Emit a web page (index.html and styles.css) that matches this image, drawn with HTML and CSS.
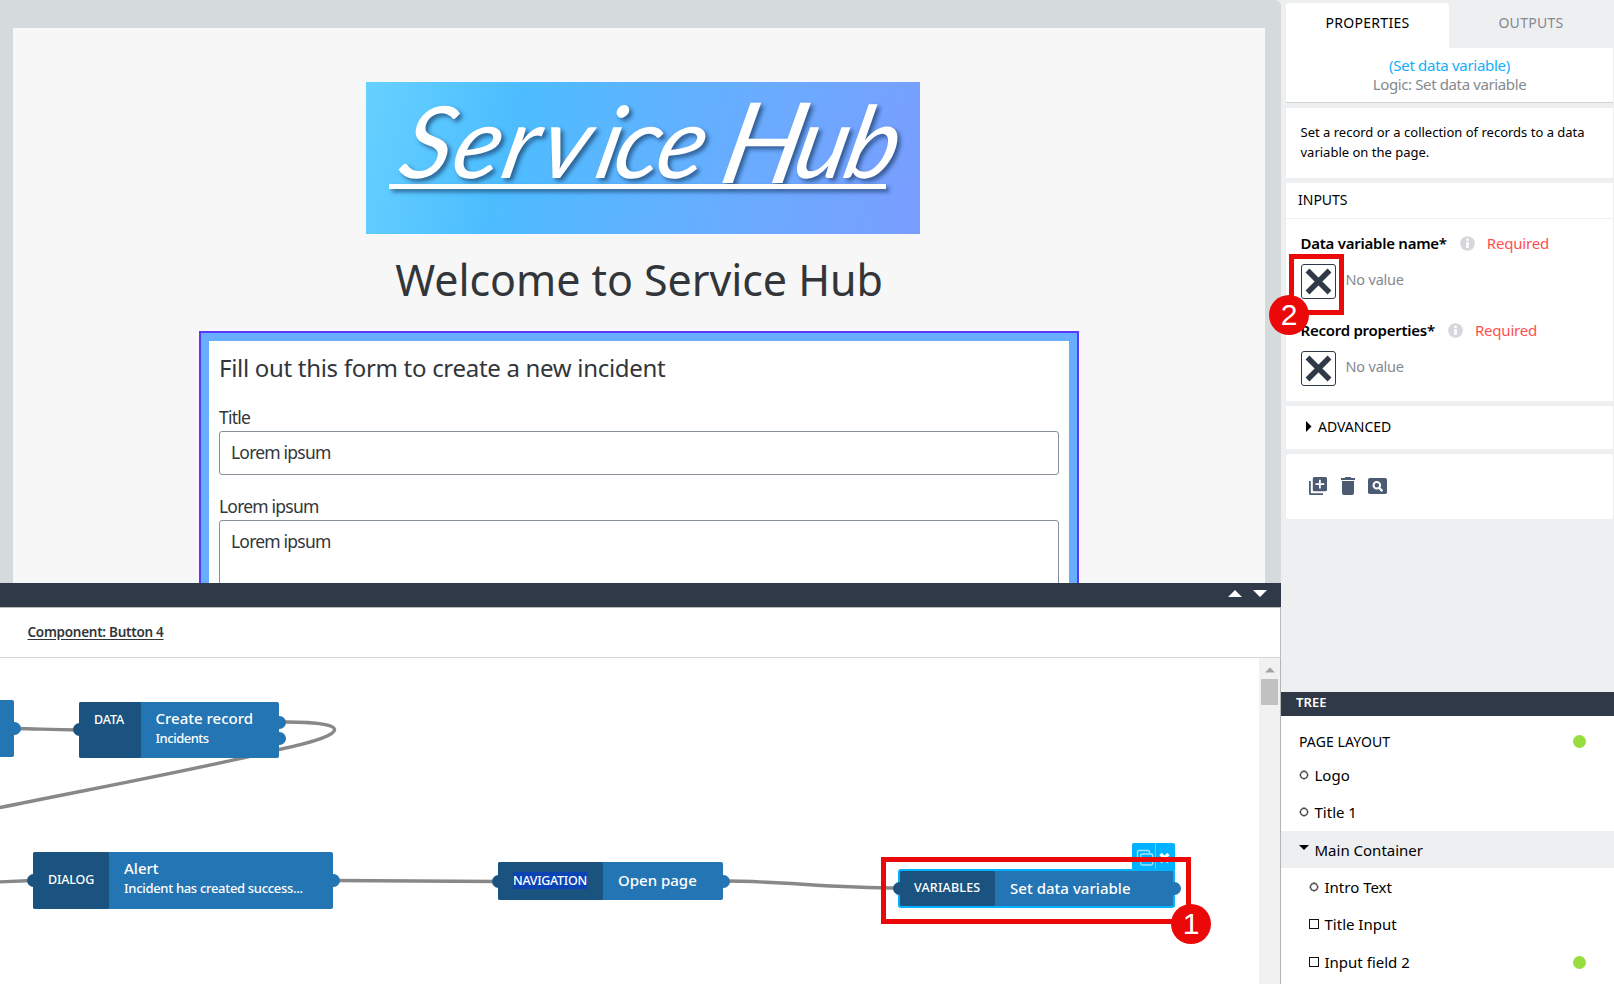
FILE: index.html
```html
<!DOCTYPE html>
<html lang="en">
<head>
<meta charset="utf-8">
<title>Service Hub editor</title>
<link rel="stylesheet" href="styles.css">
</head>
<body>
<div class="app">
  <main class="work">
    <section class="preview">
      <div class="page">
        <svg class="logo" width="554" height="152" viewBox="0 0 554 152">
          <g class="logo-ink">
            <text class="logo-text" transform="translate(0 96) skewX(-13)" x="30 82 132 170 226 244 286" y="0">Service</text>
            <text class="logo-text" transform="translate(0 96) skewX(-13)" x="352 424 474" y="5 0 0"><tspan class="logo-cap">H</tspan>ub</text>
            <rect x="23" y="102" width="497" height="5"/>
          </g>
        </svg>
        <h1 class="title">Welcome to Service Hub</h1>
        <form class="form">
          <h2 class="form-title">Fill out this form to create a new incident</h2>
          <label class="label">Title</label>
          <div class="field">Lorem ipsum</div>
          <label class="label second">Lorem ipsum</label>
          <div class="field area">Lorem ipsum</div>
        </form>
      </div>
    </section>
    <div class="splitter">
      <svg width="40" height="9" viewBox="0 0 40 9"><path d="M0 8L7 1l7 7zM25 1h14l-7 7z" fill="#fff"/></svg>
    </div>
    <div class="crumb"><span class="crumb-link">Component: Button 4</span></div>
    <section class="flow">
      <div class="stage">
        <svg class="wires" width="1259" height="326" viewBox="0 658 1259 326">
          <path d="M14 728.5C40 728.5 45 730 79 730M279 722C348 721 358 733 279 749.500C200 769 80 791-2 808M-2 882L33 880.500M333 880.500L498 881.500M723 881C785 881 825 888 900 888"/>
        </svg>
        <div class="node n-prev"><i class="dot out"></i></div>
        <div class="node n-data"><i class="dot in"></i><i class="dot out upper"></i><i class="dot out lower"></i>
          <span class="kind">DATA</span><div class="info"><b class="name">Create record</b><span class="sub">Incidents</span></div></div>
        <div class="node n-dialog"><i class="dot in"></i><i class="dot out"></i>
          <span class="kind">DIALOG</span><div class="info"><b class="name">Alert</b><span class="sub">Incident has created success...</span></div></div>
        <div class="node n-nav"><i class="dot in"></i><i class="dot out"></i>
          <span class="kind"><mark>NAVIGATION</mark></span><div class="info"><b class="name">Open page</b></div></div>
        <div class="tools">
          <svg width="44" height="28" viewBox="0 0 44 28"><path d="M23.500 0v26" stroke="#63cdf8"/><g fill="none" stroke="#a9e4ff" stroke-width="1.300"><path d="M8 17.500H7a1.500 1.500 0 0 1-1.500-1.500V9A1.500 1.500 0 0 1 7 7.500h9A1.500 1.500 0 0 1 17.500 9v1"/><rect x="8.700" y="11" width="12" height="11" rx="1.500"/></g><path d="M28.500 11l8 8m0-8l-8 8" stroke="#fff" stroke-width="3.400"/></svg>
        </div>
        <div class="node n-var"><i class="dot in"></i><i class="dot out"></i>
          <span class="kind">VARIABLES</span><div class="info"><b class="name">Set data variable</b></div></div>
      </div>
      <div class="scroll">
        <svg width="10" height="6" viewBox="0 0 10 6"><path d="M0 5.500L5 .5l5 5z" fill="#a3a3a3"/></svg>
        <div class="thumb"></div>
      </div>
    </section>
  </main>
  <aside class="side">
    <div class="tabs"><div class="tab active">PROPERTIES</div><div class="tab">OUTPUTS</div></div>
    <div class="card head"><div class="head-name">(Set data variable)</div><div class="head-type">Logic: Set data variable</div></div>
    <div class="card desc">Set a record or a collection of records to a data<br>variable on the page.</div>
    <div class="card inputs">
      <div class="inputs-title">INPUTS</div>
      <div class="prop">
        <div class="prop-head"><b class="prop-name">Data variable name*</b><svg width="15" height="15" viewBox="0 0 15 15"><circle cx="7.500" cy="7.500" r="7.300" fill="#d5d7dc"/><path d="M6.200 2.800h2.600v2.100H6.200zM6.200 6h2.600v6H6.200z" fill="#fff"/></svg><span class="req">Required</span></div>
        <div class="prop-value"><span class="box"><svg width="27" height="27" viewBox="0 0 27 27"><path d="M2.500 2.500l22 22m0-22l-22 22" stroke="#303947" stroke-width="5.400"/></svg></span><span class="none">No value</span></div>
      </div>
      <div class="prop">
        <div class="prop-head"><b class="prop-name">Record properties*</b><svg width="15" height="15" viewBox="0 0 15 15"><circle cx="7.500" cy="7.500" r="7.300" fill="#d5d7dc"/><path d="M6.200 2.800h2.600v2.100H6.200zM6.200 6h2.600v6H6.200z" fill="#fff"/></svg><span class="req">Required</span></div>
        <div class="prop-value"><span class="box"><svg width="27" height="27" viewBox="0 0 27 27"><path d="M2.500 2.500l22 22m0-22l-22 22" stroke="#303947" stroke-width="5.400"/></svg></span><span class="none">No value</span></div>
      </div>
    </div>
    <div class="card advanced"><svg width="6" height="11" viewBox="0 0 6 11"><path d="M0 0l5.500 5.500L0 11z"/></svg>ADVANCED</div>
    <div class="card actions">
      <svg width="18" height="18" viewBox="0 0 18 18"><path fill="#4c5a73" fill-rule="evenodd" d="M0 4h1.800v12.200H14V18H1.500A1.500 1.500 0 0 1 0 16.500zM5.300 0h11.200A1.500 1.500 0 0 1 18 1.500v11.200a1.500 1.500 0 0 1-1.500 1.500H5.300a1.500 1.500 0 0 1-1.500-1.500V1.500A1.500 1.500 0 0 1 5.300 0zM10 2.700v3.500H6.500V8H10v3.500h1.800V8h3.500V6.200h-3.500V2.700z"/></svg>
      <svg width="14" height="18" viewBox="0 0 14 18"><path fill="#4c5a73" d="M0 1h3.500l1-1h5l1 1H14v2H0zM1 4h12v12a2 2 0 0 1-2 2H3a2 2 0 0 1-2-2z"/></svg>
      <svg width="19" height="16" viewBox="0 0 19 16"><rect width="19" height="16" rx="1.800" fill="#4c5a73"/><circle cx="8.800" cy="7.300" r="3.300" fill="none" stroke="#fff" stroke-width="2"/><path d="M11 9.700l3.400 3.400" stroke="#fff" stroke-width="2.200"/></svg>
    </div>
    <div class="tree-bar">TREE</div>
    <div class="tree">
      <div class="tree-root">PAGE LAYOUT<i class="status"></i></div>
      <div class="row up"><i class="leaf"></i>Logo</div>
      <div class="row up"><i class="leaf"></i>Title 1</div>
      <div class="row selected"><i class="caret"></i>Main Container</div>
      <div class="row child up"><i class="leaf"></i>Intro Text</div>
      <div class="row child up"><i class="square"></i>Title Input</div>
      <div class="row child"><i class="square"></i>Input field 2<i class="status"></i></div>
    </div>
  </aside>
  <div class="frame one"><span class="badge">1</span></div>
  <div class="frame two"><span class="badge">2</span></div>
</div>
</body>
</html>
```
FILE: styles.css
```css
* { box-sizing: border-box; }
body { margin: 0; font-family: "Noto Sans", sans-serif; color: #000; }
svg { display: block; flex: none; }
i { font-style: normal; }
.app { position: relative; display: flex; width: 1614px; height: 984px; overflow: hidden; background: #eeeff1; }

.work { width: 1281px; height: 984px; display: flex; flex-direction: column; }
.preview { height: 583px; padding: 28px 16px 0 13px; background: #d5dadd; overflow: hidden; border-top-right-radius: 6px; }
.page { height: 555px; background: #f7f7f7; display: flex; flex-direction: column; align-items: center; padding: 54px 0 0; overflow: hidden; }
.logo { margin-left: 7px; overflow: visible; background: linear-gradient(104deg, #66d1ff 0%, #4dbdff 26%, #68adff 65%, #7a9dff 100%); }
.logo-ink { fill: #fff; filter: drop-shadow(3px 3px 2px rgba(20, 50, 90, .65)); }
.logo-text { font: italic 400 100px Lato, sans-serif; }
.logo-cap { font-size: 112px; }
.title { margin: 16px 0 0; font-size: 43px; font-weight: 400; line-height: 60px; letter-spacing: -.06px; color: #32363a; }
.form { margin: 21px 0 0; width: 880px; height: 400px; flex: none; border: 2px solid #5b38ff; outline: 8px solid #68aeff; outline-offset: -10px; background: #fff; padding: 19px 18px 0; color: #32363a; }
.form-title { margin: 0; font-size: 24px; font-weight: 400; line-height: 32px; letter-spacing: -.3px; }
.label { display: block; margin-top: 20px; height: 27px; font-size: 17.5px; line-height: 26px; letter-spacing: -.8px; }
.label.second { margin-top: 18px; }
.field { height: 44px; border: 1px solid #89919a; border-radius: 3px; padding: 0 11px; font-size: 17.5px; line-height: 41px; letter-spacing: -.8px; }
.area { height: 120px; }

.splitter { height: 24px; background: #303947; display: flex; justify-content: flex-end; padding: 6px 13px 0 0; }
.crumb { height: 51px; background: #fff; border: solid #bbb; border-width: 1px 1px 1px 0; border-bottom-color: #d5d5d5; padding: 12px 0 0 27.5px; }
.crumb-link { font-size: 13.5px; font-weight: 600; line-height: 22px; letter-spacing: -.27px; color: #32363a; text-decoration: underline; text-underline-offset: 2px; }
.flow { height: 326px; display: flex; background: #fff; border-right: 1px solid #b4b4b4; }
.stage { position: relative; width: 1259px; overflow: hidden; }
.scroll { width: 21px; background: #f1f1f1; display: flex; flex-direction: column; align-items: center; padding-top: 9px; gap: 6px; }
.thumb { width: 17px; height: 26px; background: #c1c1c1; }
.wires { position: absolute; left: 0; top: 0; fill: none; stroke: #888; stroke-width: 3.4; }

.node { position: absolute; display: flex; background: #2375b3; border-radius: 2px; color: #fff; }
.kind { position: relative; background: #1a5380; border-radius: 2px; font-size: 12.5px; font-weight: 500; line-height: 18px; padding-left: 15px; letter-spacing: -.15px; flex: none; }
.info { padding-left: 15px; display: flex; flex-direction: column; white-space: nowrap; }
.name { font-size: 15px; font-weight: 500; line-height: 20px; }
.sub { font-size: 13px; font-weight: 500; line-height: 18px; letter-spacing: -.31px; }
.dot { position: absolute; width: 13px; height: 13px; border-radius: 50%; background: #2375b3; top: 50%; margin-top: -6.5px; }
.dot.in { left: -6px; background: #1a5380; }
.dot.out { right: -6.500px; }
.dot.upper { top: 20.500px; }
.dot.lower { top: 36.500px; }
.n-prev { left: -60px; top: 42px; width: 74px; height: 57px; }
.n-data { left: 79px; top: 43.500px; width: 200px; height: 56.500px; }
.n-data .kind { width: 61.500px; padding-top: 9px; }
.n-data .info { padding-top: 6px; }
.n-data .sub { margin-top: 1px; letter-spacing: -.5px; }
.n-dialog { left: 33px; top: 194px; width: 300px; height: 57px; }
.n-dialog .kind { width: 76px; padding-top: 18.500px; }
.n-dialog .info { padding-top: 6px; }
.n-dialog .sub { margin-top: 1px; }
.n-nav { left: 498px; top: 204px; width: 225px; height: 38px; }
.n-nav .kind { width: 105px; padding-top: 10px; letter-spacing: -.3px; }
.n-nav .info { padding-top: 8px; }
.n-nav mark { background: #0b43b5; color: #fff; }
.n-var { left: 898px; top: 211px; width: 277px; height: 39px; border: 2px solid #00b2ff; border-radius: 3px; }
.n-var .kind { width: 95px; padding-top: 8px; padding-left: 14px; letter-spacing: .2px; }
.n-var .info { padding-top: 7px; letter-spacing: .03px; }
.n-var .dot.in { left: -7px; }
.n-var .dot.out { right: -8px; }
.tools { position: absolute; left: 1132px; top: 185px; width: 43px; height: 27px; background: #00b2ff; border-radius: 2px 2px 0 0; overflow: hidden; }

.side { width: 333px; height: 984px; display: flex; flex-direction: column; background: #eeeff1; padding-top: 3px; }
.card { margin: 0 1px 5px 5px; background: #fff; flex: none; }
.tabs { display: flex; margin: 0 1px 0 5px; height: 45px; font-size: 14px; line-height: 39px; letter-spacing: .3px; text-align: center; color: #85898f; }
.tab { flex: 1; }
.tab.active { flex: none; width: 163px; background: #fff; color: #000; border-radius: 3px 3px 0 0; }
.head { height: 55px; border-bottom: 1px solid #d0d3d6; padding-top: 8px; text-align: center; font-size: 15px; line-height: 19px; color: #85898f; }
.head-name { color: #12aefb; letter-spacing: -.3px; }
.head-type { letter-spacing: -.38px; }
.desc { height: 70px; padding: 14px 0 0 14.500px; font-size: 13px; line-height: 20px; white-space: nowrap; }
.inputs { height: 218px; }
.inputs-title { height: 36px; border-bottom: 1px solid #f0f0f0; padding-left: 12px; font-size: 14px; line-height: 34px; }
.prop { padding: 13px 0 0 14.500px; height: 87px; }
.prop-head { display: flex; align-items: center; height: 22px; }
.prop-name { font-size: 15px; font-weight: 600; letter-spacing: -.25px; margin-right: 13px; }
.req { margin-left: 12px; font-size: 15px; color: #ff4f4f; letter-spacing: -.2px; }
.prop-value { display: flex; margin-top: 10px; }
.box { width: 35px; height: 35px; border: 1px solid #303947; border-radius: 3px; padding: 3px; }
.none { margin-left: 10px; font-size: 14.500px; line-height: 31px; color: #85898f; letter-spacing: -.2px; }
.advanced { height: 43px; display: flex; align-items: center; gap: 6px; padding: 0 0 2px 20px; font-size: 14px; }
.actions { height: 65px; border-radius: 3px; padding: 23px 0 0 23px; display: flex; align-items: flex-start; gap: 14px; }
.actions svg:last-child { margin: 1px 0 0 -1px; }
.tree-bar { margin-top: auto; height: 24px; background: #303947; color: #fff; font-size: 13px; font-weight: 600; line-height: 21px; padding-left: 15px; flex: none; letter-spacing: .1px; }
.tree { height: 268px; background: #fff; flex: none; }
.tree-root { height: 40.500px; display: flex; align-items: center; padding: 10px 28px 0 18px; font-size: 14px; letter-spacing: .1px; }
.row { height: 37.300px; display: flex; align-items: center; padding: 1px 28px 0 18.500px; font-size: 15px; }
.row.up { padding-top: 0; padding-bottom: 1px; }
.row.selected { background: #eeeff1; }
.row.child { padding-left: 28.500px; }
.leaf { width: 8px; height: 8px; border: 1.500px solid #222; box-shadow: 0 0 0 .4px #222; border-radius: 50%; margin: 0 7px 0 0; }
.square { width: 10px; height: 10px; border: 1px solid #111; margin: 0 6px 0 -1px; }
.caret { border: 5px solid transparent; border-top-color: #000; border-bottom: 0; margin: -5px 6px 0 -1px; }
.status { width: 13px; height: 13px; border-radius: 50%; background: #97dd3d; margin-left: auto; }

.frame { position: absolute; border: 5px solid #eb0808; }
.frame.one { left: 881px; top: 857px; width: 310px; height: 67px; }
.frame.two { left: 1289px; top: 254px; width: 55px; height: 61px; }
.badge { position: absolute; width: 40px; height: 40px; border-radius: 50%; background: #eb0808; color: #fff; font: 30px/40px "Liberation Sans", sans-serif; text-align: center; }
.one .badge { right: -25px; bottom: -25px; }
.two .badge { left: -25px; bottom: -25px; }
```
